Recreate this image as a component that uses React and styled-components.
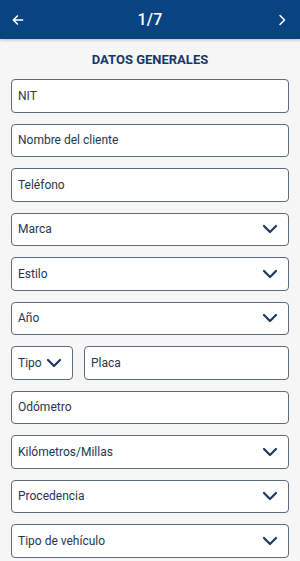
import React from 'react';
import styled, { createGlobalStyle } from 'styled-components';

const GlobalStyle = createGlobalStyle`
  html, body {
    margin: 0;
    padding: 0;
    background: #f6f6f6;
    font-family: Roboto, "Noto Sans", sans-serif;
  }
  * { box-sizing: border-box; }
`;

const Screen = styled.div`
  width: 300px;
  min-height: 561px;
  background: #f6f6f6;
  overflow: hidden;
`;

const TopBar = styled.div`
  height: 39px;
  background: #0a4480;
  display: flex;
  align-items: center;
  justify-content: space-between;
  padding: 0 10px 0 10px;
  color: #fff;
  box-shadow: 0 1px 3px rgba(0, 0, 0, 0.25);
  position: relative;
  z-index: 1;
`;

const NavButton = styled.button`
  background: none;
  border: 0;
  padding: 0;
  width: 16px;
  height: 16px;
  display: flex;
  align-items: center;
  justify-content: center;
  color: #fff;
`;

const Counter = styled.div`
  font-size: 16px;
  font-weight: 500;
  letter-spacing: 0.2px;
`;

const Title = styled.h2`
  margin: 0;
  padding: 13px 0 12px;
  text-align: center;
  font-size: 13px;
  font-weight: 700;
  color: #163764;
  line-height: 15px;
`;

const Form = styled.div`
  display: flex;
  flex-direction: column;
  gap: 11px;
  padding: 0 11px;
`;

const Field = styled.div`
  height: 33.5px;
  flex: ${p => (p.$grow ? 1 : 'none')};
  width: ${p => p.$width || 'auto'};
  background: #fff;
  border: 1px solid #5f6b78;
  border-radius: 4px;
  display: flex;
  align-items: center;
  justify-content: space-between;
  padding: 0 10px 0 6px;
  font-size: 12px;
  color: #25374f;
`;

const Row = styled.div`
  display: flex;
  gap: 11px;
`;

const Chevron = styled.svg`
  width: 16px;
  height: 10px;
  flex: none;
`;

const Left = () => (
  <svg width="14" height="14" viewBox="0 0 24 24" fill="none" stroke="#fff" strokeWidth="2.6" strokeLinecap="round" strokeLinejoin="round">
    <path d="M20 12H4M11 5l-7 7 7 7" />
  </svg>
);

const Right = () => (
  <svg width="12" height="14" viewBox="0 0 24 24" fill="none" stroke="#fff" strokeWidth="3" strokeLinecap="round" strokeLinejoin="round">
    <path d="M8 3l9 9-9 9" />
  </svg>
);

const Down = () => (
  <Chevron viewBox="0 0 16 10" fill="none" stroke="#1f3a5c" strokeWidth="2.2" strokeLinecap="round" strokeLinejoin="round">
    <path d="M2 2l6 6 6-6" />
  </Chevron>
);

const Input = ({ label, select, ...rest }) => (
  <Field {...rest}>
    <span>{label}</span>
    {select && <Down />}
  </Field>
);

export default function App() {
  return (
    <Screen>
      <GlobalStyle />
      <TopBar>
        <NavButton><Left /></NavButton>
        <Counter>1/7</Counter>
        <NavButton><Right /></NavButton>
      </TopBar>
      <Title>DATOS GENERALES</Title>
      <Form>
        <Input label="NIT" />
        <Input label="Nombre del cliente" />
        <Input label="Teléfono" />
        <Input label="Marca" select />
        <Input label="Estilo" select />
        <Input label="Año" select />
        <Row>
          <Input label="Tipo" select $width="62px" />
          <Input label="Placa" $grow />
        </Row>
        <Input label="Odómetro" />
        <Input label="Kilómetros/Millas" select />
        <Input label="Procedencia" select />
        <Input label="Tipo de vehículo" select />
      </Form>
    </Screen>
  );
}
